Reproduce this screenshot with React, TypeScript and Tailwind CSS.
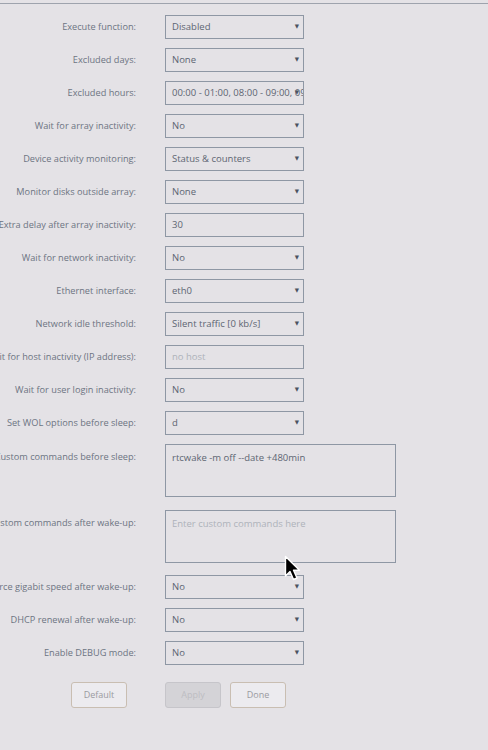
import React from 'react';

type Field =
  | { label: string; kind: 'select'; value: string }
  | { label: string; kind: 'input'; value: string; placeholder?: boolean }
  | { label: string; kind: 'textarea'; value: string; placeholder?: boolean; gap: string };

const fields: Field[] = [
  { label: 'Execute function:', kind: 'select', value: 'Disabled' },
  { label: 'Excluded days:', kind: 'select', value: 'None' },
  { label: 'Excluded hours:', kind: 'select', value: '00:00 - 01:00, 08:00 - 09:00, 09:00' },
  { label: 'Wait for array inactivity:', kind: 'select', value: 'No' },
  { label: 'Device activity monitoring:', kind: 'select', value: 'Status & counters' },
  { label: 'Monitor disks outside array:', kind: 'select', value: 'None' },
  { label: 'Extra delay after array inactivity:', kind: 'input', value: '30' },
  { label: 'Wait for network inactivity:', kind: 'select', value: 'No' },
  { label: 'Ethernet interface:', kind: 'select', value: 'eth0' },
  { label: 'Network idle threshold:', kind: 'select', value: 'Silent traffic [0 kb/s]' },
  { label: 'Wait for host inactivity (IP address):', kind: 'input', value: 'no host', placeholder: true },
  { label: 'Wait for user login inactivity:', kind: 'select', value: 'No' },
  { label: 'Set WOL options before sleep:', kind: 'select', value: 'd' },
  { label: 'Custom commands before sleep:', kind: 'textarea', value: 'rtcwake -m off --date +480min', gap: 'mb-[4px]' },
  { label: 'Custom commands after wake-up:', kind: 'textarea', value: 'Enter custom commands here', placeholder: true, gap: 'mb-[3px]' },
  { label: 'Force gigabit speed after wake-up:', kind: 'select', value: 'No' },
  { label: 'DHCP renewal after wake-up:', kind: 'select', value: 'No' },
  { label: 'Enable DEBUG mode:', kind: 'select', value: 'No' },
];

const font = { fontFamily: '"Open Sans", "DejaVu Sans", sans-serif' };

function Label({ text, tall }: { text: string; tall?: boolean }) {
  return (
    <div
      className={`w-[136px] shrink-0 flex justify-end whitespace-nowrap text-[9.2px] text-[#6c7482] ${
        tall ? 'items-start pt-[6px]' : 'items-center'
      }`}
    >
      <span>{text}</span>
    </div>
  );
}

function Control({ field }: { field: Field }) {
  if (field.kind === 'textarea') {
    return (
      <div className="w-[231px] h-[53px] border border-[#8e97a4] px-[6px] pt-[6px] text-[9.5px] leading-[14px] overflow-hidden whitespace-nowrap">
        <span className={field.placeholder ? 'text-[#aeb2ba]' : 'text-[#5d6572]'}>{field.value}</span>
      </div>
    );
  }
  return (
    <div className="relative w-[139px] h-[24px] border border-[#8e97a4] flex items-center pl-[6px] overflow-hidden whitespace-nowrap text-[9.5px]">
      <span className={field.kind === 'input' && field.placeholder ? 'text-[#aeb2ba]' : 'text-[#5d6572]'}>
        {field.value}
      </span>
      {field.kind === 'select' && (
        <span className="absolute right-[4px] top-1/2 -translate-y-1/2 leading-none text-[5.5px] text-[#4b5361]">
          ▼
        </span>
      )}
    </div>
  );
}

function Cursor() {
  return (
    <svg
      className="absolute left-[284px] top-[555px]"
      width="20"
      height="28"
      viewBox="0 0 20 28"
    >
      <path
        d="M1.5 1.5 L1.5 21 L6 16.5 L9.5 24.5 L13 23 L9.5 15.2 L15.5 15.2 Z"
        fill="#000"
        stroke="#fff"
        strokeWidth="1.4"
        strokeLinejoin="round"
      />
    </svg>
  );
}

export default function App() {
  return (
    <div className="relative w-[488px] h-[750px] bg-[#e4e2e6] overflow-hidden" style={font}>
      <div className="h-[4px] border-b border-[#9ea3ad]" />
      <div className="flex flex-col gap-[9px] pt-[11px]">
        {fields.map((f) => (
          <div key={f.label} className={`flex gap-[29px] ${f.kind === 'textarea' ? f.gap : ''}`}>
            <Label text={f.label} tall={f.kind === 'textarea'} />
            <Control field={f} />
          </div>
        ))}
        <div className="flex gap-[38px] pt-[8px] text-[9px]">
          <div className="w-[127px] flex justify-end">
            <button className="w-[56px] h-[26px] rounded-[3px] border border-[#c9beb2] bg-[#ecebef] text-[#9a9aa0]">
              Default
            </button>
          </div>
          <div className="flex gap-[9px]">
            <button className="w-[56px] h-[26px] rounded-[3px] border border-[#c6c5ca] bg-[#d4d3d7] text-[#bdbdc2]">
              Apply
            </button>
            <button className="w-[56px] h-[26px] rounded-[3px] border border-[#c9beb2] bg-[#ecebef] text-[#9a9aa0]">
              Done
            </button>
          </div>
        </div>
      </div>
      <Cursor />
    </div>
  );
}
